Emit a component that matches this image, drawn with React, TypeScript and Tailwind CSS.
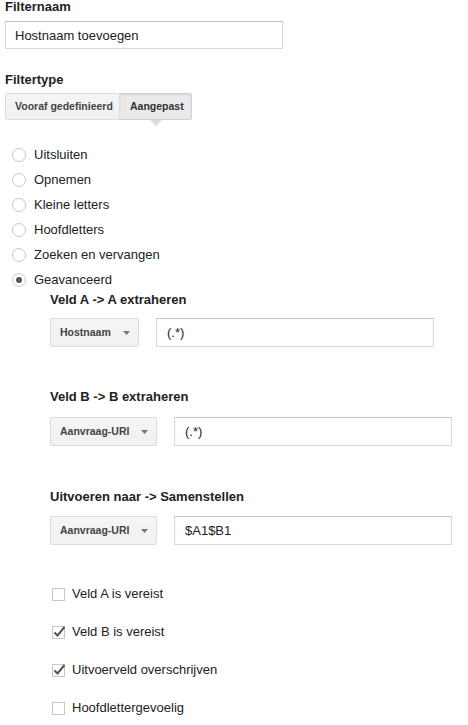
import React from 'react';

const FONT = 'font-["Liberation_Sans",Arial,sans-serif]';

const RADIOS = ['Uitsluiten', 'Opnemen', 'Kleine letters', 'Hoofdletters', 'Zoeken en vervangen', 'Geavanceerd'];

const CHECKS: { label: string; checked: boolean }[] = [
  { label: 'Veld A is vereist', checked: false },
  { label: 'Veld B is vereist', checked: true },
  { label: 'Uitvoerveld overschrijven', checked: true },
  { label: 'Hoofdlettergevoelig', checked: false },
];

const Caret: React.FC = () => (
  <svg width="7" height="4" viewBox="0 0 7 4" className="shrink-0">
    <path d="M0 0h7L3.5 4z" fill="#777" />
  </svg>
);

const FieldRow: React.FC<{ select: string; selectWidth: string; value: string; mt: string }> = ({
  select,
  selectWidth,
  value,
  mt,
}) => (
  <div className={`flex items-center ${mt}`}>
    <div
      className={`${selectWidth} h-[29px] flex items-center justify-between pl-[9px] pr-[8px] border border-[#dcdcdc] rounded-[2px] bg-gradient-to-b from-[#f5f5f5] to-[#f1f1f1] text-[10.5px] font-bold text-[#444]`}
    >
      <span>{select}</span>
      <Caret />
    </div>
    <div className="ml-[17px] w-[278px] h-[29px] flex items-center pl-[10px] border border-[#d9d9d9] border-t-[#c0c0c0] text-[13px] text-[#222]">
      {value}
    </div>
  </div>
);

const SectionLabel: React.FC<{ children: React.ReactNode; mt?: string }> = ({ children, mt = '' }) => (
  <div className={`text-[13px] font-bold leading-[14px] text-[#222] ${mt}`}>{children}</div>
);

export default function App() {
  const [filterName, setFilterName] = React.useState('Hostnaam toevoegen');
  const [radio, setRadio] = React.useState('Geavanceerd');
  const [checks, setChecks] = React.useState(CHECKS.map((c) => c.checked));

  return (
    <div className={`${FONT} w-[468px] h-[725px] bg-white text-[#222] overflow-hidden`}>
      <div className="pl-[5px]">
        <SectionLabel>Filternaam</SectionLabel>
        <input
          className="mt-[7px] block w-[278px] h-[28px] pl-[9px] border border-[#d9d9d9] border-t-[#c0c0c0] text-[13px] text-[#222] outline-none"
          value={filterName}
          onChange={(e) => setFilterName(e.target.value)}
        />
        <SectionLabel mt="mt-[24px]">Filtertype</SectionLabel>
        <div className="mt-[6px] flex text-[10.5px] font-bold text-[#444]">
          <div className="w-[115px] h-[27px] flex items-center pl-[9px] border border-[#dcdcdc] rounded-l-[2px] bg-gradient-to-b from-[#f5f5f5] to-[#f1f1f1]">
            Vooraf gedefinieerd
          </div>
          <div className="relative w-[72px] h-[27px] flex items-center pl-[10px] border border-l-0 border-[#d0d0d0] rounded-r-[2px] bg-[#eaeaea] shadow-[inset_0_1px_2px_rgba(0,0,0,0.08)] text-[#333]">
            Aangepast
            <svg width="12" height="7" viewBox="0 0 12 7" className="absolute left-[30px] top-[26px]">
              <path d="M0 0h12L6 6.5z" fill="#dcdcdc" />
            </svg>
          </div>
        </div>
        <div className="mt-[22px]">
          {RADIOS.map((r) => (
            <label key={r} className="h-[25px] flex items-center cursor-pointer" onClick={() => setRadio(r)}>
              <span className="ml-[7px] w-[14px] h-[14px] rounded-full border border-[#c8c8c8] bg-white flex items-center justify-center">
                {radio === r && <span className="w-[6px] h-[6px] rounded-full bg-[#555]" />}
              </span>
              <span className="ml-[8px] text-[13px] text-[#222]">{r}</span>
            </label>
          ))}
        </div>
      </div>

      <div className="pl-[50px]">
        <SectionLabel mt="mt-[1px]">Veld A -&gt; A extraheren</SectionLabel>
        <FieldRow select="Hostnaam" selectWidth="w-[89px]" value="(.*)" mt="mt-[11px]" />
        <SectionLabel mt="mt-[43px]">Veld B -&gt; B extraheren</SectionLabel>
        <FieldRow select="Aanvraag-URI" selectWidth="w-[107px]" value="(.*)" mt="mt-[13px]" />
        <SectionLabel mt="mt-[44px]">Uitvoeren naar -&gt; Samenstellen</SectionLabel>
        <FieldRow select="Aanvraag-URI" selectWidth="w-[107px]" value="$A1$B1" mt="mt-[12px]" />

        <div className="mt-[30px]">
          {CHECKS.map((c, i) => (
            <label
              key={c.label}
              className="h-[38px] flex items-center cursor-pointer"
              onClick={() => setChecks((prev) => prev.map((v, j) => (j === i ? !v : v)))}
            >
              <span className="relative ml-[2px] w-[13px] h-[13px] border border-[#c6c6c6] bg-white">
                {checks[i] && (
                  <svg width="15" height="13" viewBox="0 0 15 13" className="absolute left-[-1px] top-[-2px]">
                    <path d="M2.5 7.5l3 3L12.5 2" fill="none" stroke="#555" strokeWidth="2" />
                  </svg>
                )}
              </span>
              <span className="ml-[7px] text-[13px] text-[#222]">{c.label}</span>
            </label>
          ))}
        </div>
      </div>
    </div>
  );
}
